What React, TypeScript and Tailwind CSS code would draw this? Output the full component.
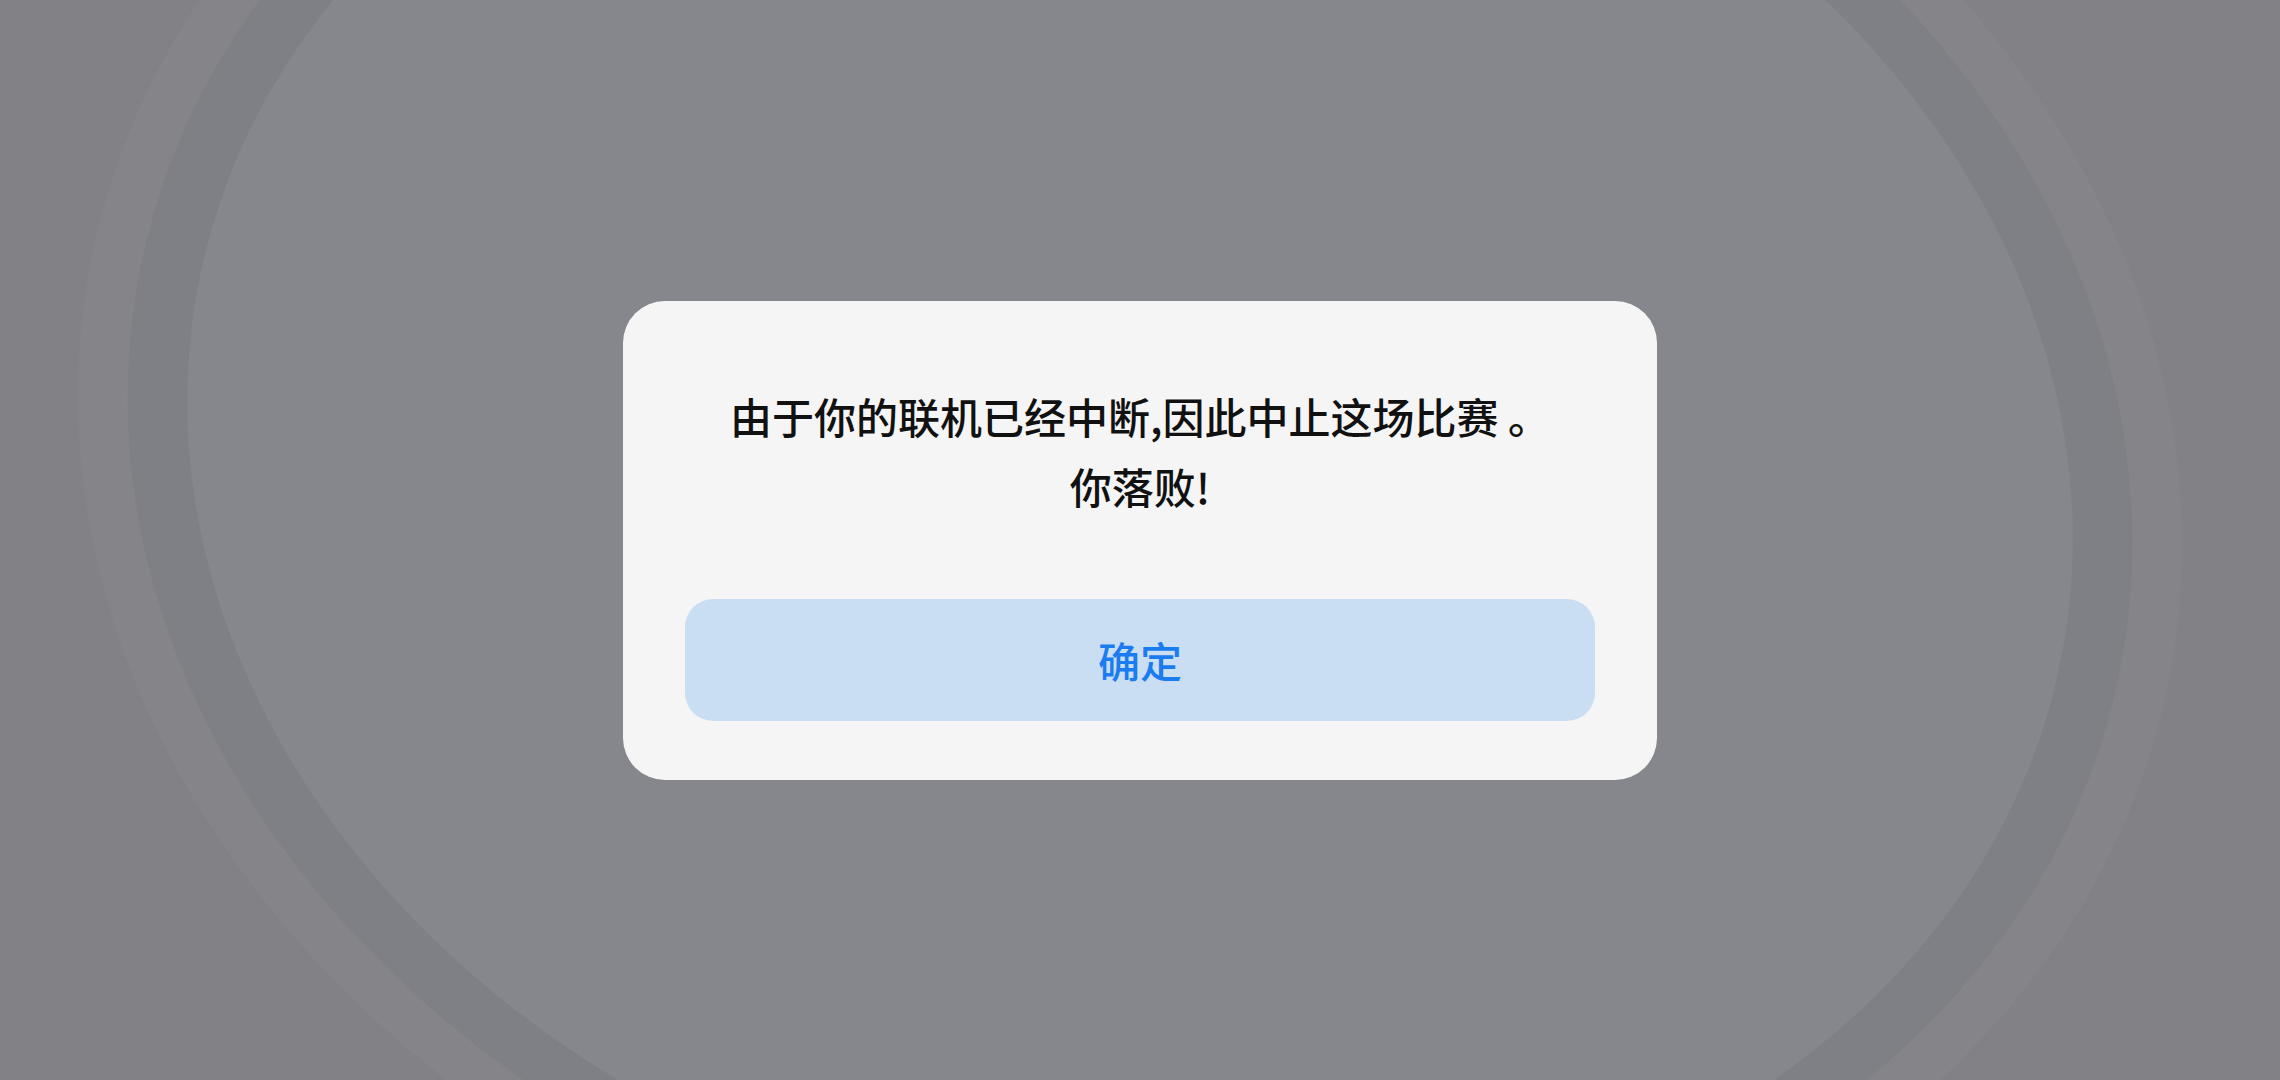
import React from "react";

// Swirl backdrop behind the dialog (a drawing, so SVG)
function Backdrop() {
  return (
    <svg
      className="absolute inset-0 h-full w-full"
      viewBox="0 0 2280 1080"
      preserveAspectRatio="none"
    >
      <rect width="2280" height="1080" fill="#818186" />
      <g transform="rotate(12 1130 470)">
        <ellipse cx="1130" cy="470" rx="1060" ry="860" fill="#848489" />
        <ellipse cx="1130" cy="470" rx="1010" ry="815" fill="#7f8085" />
        <ellipse cx="1130" cy="470" rx="950" ry="765" fill="#86878c" />
      </g>
    </svg>
  );
}

export default function App() {
  return (
    <div
      className="relative flex h-[1080px] w-full items-center justify-center overflow-hidden bg-[#86878c]"
      style={{ fontFamily: '"Noto Sans CJK SC", "Noto Sans", sans-serif' }}
    >
      <Backdrop />

      <div className="relative flex w-[1034px] flex-col rounded-[42px] bg-[#f5f5f5] px-[62px] pt-[80px] pb-[59px]">
        <div className="text-center text-[42px] font-medium leading-[70px] text-[#111111]">
          <p>由于你的联机已经中断,因此中止这场比赛 。</p>
          <p>你落败!</p>
        </div>

        <button className="mt-[78px] flex h-[122px] w-full items-center justify-center rounded-[28px] bg-[#cadef3] text-[42px] font-medium text-[#1b7cf0]">
          确定
        </button>
      </div>
    </div>
  );
}
